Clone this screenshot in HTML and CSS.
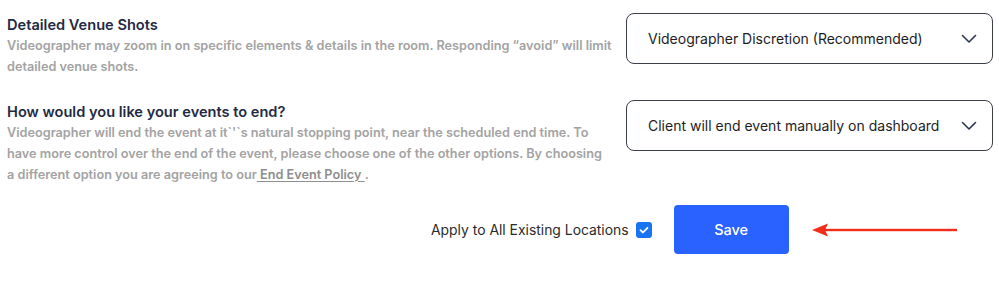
FILE: index.html
```html
<!DOCTYPE html>
<html>
<head>
<meta charset="utf-8">
<link rel="stylesheet" href="styles.css">
</head>
<body>
<div class="page">
  <div class="row">
    <div class="info">
      <div class="title">Detailed Venue Shots</div>
      <div class="desc">Videographer may zoom in on specific elements &amp; details in the room. Responding “avoid” will limit<br>detailed venue shots.</div>
    </div>
    <div class="select">
      <span>Videographer Discretion (Recommended)</span>
      <svg class="chev" width="16" height="10" viewBox="0 0 16 10"><path d="M1.5 1.5 L8 8 L14.5 1.5" fill="none" stroke="#2a3550" stroke-width="1.6" stroke-linecap="round" stroke-linejoin="round"/></svg>
    </div>
  </div>
  <div class="row row2">
    <div class="info">
      <div class="title">How would you like your events to end?</div>
      <div class="desc">Videographer will end the event at it`'`s natural stopping point, near the scheduled end time. To<br>have more control over the end of the event, please choose one of the other options. By choosing<br>a different option you are agreeing to our<a class="policy" href="#"> End Event Policy </a>.</div>
    </div>
    <div class="select">
      <span>Client will end event manually on dashboard</span>
      <svg class="chev" width="16" height="10" viewBox="0 0 16 10"><path d="M1.5 1.5 L8 8 L14.5 1.5" fill="none" stroke="#2a3550" stroke-width="1.6" stroke-linecap="round" stroke-linejoin="round"/></svg>
    </div>
  </div>
  <div class="actions">
    <label class="apply">Apply to All Existing Locations
      <span class="check"><svg width="16" height="16" viewBox="0 0 16 16"><path d="M4.5 8.2 L7 10.5 L11.5 5.8" fill="none" stroke="#fff" stroke-width="1.8" stroke-linecap="round" stroke-linejoin="round"/></svg></span>
    </label>
    <button class="save">Save</button>
    <svg class="arrow" width="146" height="14" viewBox="0 0 146 14"><path d="M0 7 L16 0.5 L13 7 L16 13.5 Z" fill="#f22d1b"/><rect x="12" y="5.8" width="133" height="2.4" fill="#f22d1b"/></svg>
  </div>
</div>
</body>
</html>
```
FILE: styles.css
```css
* { box-sizing: border-box; }
body {
  margin: 0;
  background: #fff;
  font-family: Inter, "Noto Sans", "Liberation Sans", sans-serif;
}
.page {
  padding: 13px 6px 0 7px;
}
.row {
  display: grid;
  grid-template-columns: 613px 367px;
  column-gap: 6px;
  align-items: start;
}
.row2 {
  margin-top: 23px;
}
.info {
  padding-top: 3px;
}
.title {
  font-size: 14.6px;
  font-weight: 600;
  color: #1f2a44;
  line-height: 19px;
}
.desc {
  font-size: 12.7px;
  font-weight: 600;
  color: #a3a3a3;
  line-height: 21px;
}
.policy {
  color: #8e8e8e;
  text-decoration: underline;
  text-underline-offset: 2px;
}
.select {
  height: 51px;
  border: 1px solid #3a3f4a;
  border-radius: 8px;
  display: flex;
  align-items: center;
  justify-content: space-between;
  padding: 0 15px 0 21px;
  font-size: 14px;
  color: #1d1d1f;
}
.chev { display: block; }
.actions {
  display: flex;
  align-items: center;
  margin-top: 20px;
  padding-left: 424px;
}
.apply {
  display: flex;
  align-items: center;
  font-size: 13.9px;
  color: #2b2b2b;
}
.check {
  width: 16px;
  height: 16px;
  border-radius: 3px;
  background: #1a73f0;
  margin-left: 7px;
  display: inline-flex;
}
.save {
  margin-left: 22px;
  width: 115px;
  height: 49px;
  border: 0;
  border-radius: 4px;
  background: #2962ff;
  color: #fff;
  font-family: inherit;
  font-size: 14.5px;
  font-weight: 500;
}
.arrow {
  margin-left: 23px;
}
```
